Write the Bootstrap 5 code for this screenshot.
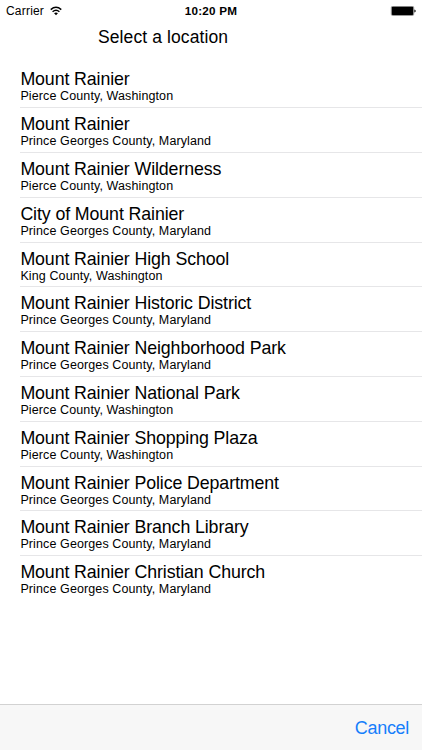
<!DOCTYPE html>
<html lang="en">
<head>
<meta charset="utf-8">
<meta name="viewport" content="width=device-width, initial-scale=1">
<title>Select a location</title>
<link href="https://cdn.jsdelivr.net/npm/bootstrap@5.3.0/dist/css/bootstrap.min.css" rel="stylesheet">
<style>
body{font-family:"Liberation Sans",Arial,sans-serif;color:#000;background:#fff}
.screen{height:750px;overflow:hidden}
.status{height:21px;padding:0 6px;font-size:12px;line-height:22px}
.status svg{display:block}
.clock{font-size:11.7px;letter-spacing:.2px}
.carrier{letter-spacing:.2px;margin-right:6px}
.heading{font-size:17.5px;line-height:32px;height:42.4px;padding-left:98px;letter-spacing:.1px}
.places{padding-left:20.4px}
.place{height:44.8px;border-bottom:1px solid #e6e6e8;padding-top:6px}
.place:last-child{border-bottom:0}
.place-name{font-size:17.8px;line-height:20px;letter-spacing:-.11px;white-space:nowrap}
.place-area{font-size:12.5px;line-height:15.6px;letter-spacing:.11px;white-space:nowrap}
.toolbar{height:46px;background:#f7f7f7;border-top:1px solid #d2d2d2;padding:0 13px}
.cancel{font-size:18px;line-height:46px;letter-spacing:-.3px;color:#167efb;text-decoration:none}
</style>
</head>
<body>
<div class="screen d-flex flex-column">
<header class="status row g-0 flex-shrink-0">
<div class="col d-flex align-items-center"><span class="carrier">Carrier</span>
<svg width="12" height="10" viewBox="0 0 13 10" fill="none" stroke="#000" stroke-width="1.6"><path d="M.8 3.5Q6.5-1.4 12.2 3.5M2.8 5.8Q6.5 2.7 10.2 5.8"/><path d="M4.4 7.4Q6.5 5.8 8.6 7.4L6.5 9.6Z" fill="#000" stroke="none"/></svg></div>
<div class="col-auto fw-bold clock">10:20 PM</div>
<div class="col d-flex align-items-center justify-content-end"><svg width="26" height="10" viewBox="0 0 26 10"><rect x="1.3" y=".3" width="22.4" height="9.2" rx="1.3" fill="none" stroke="#555" stroke-width=".6"/><rect x="1.8" y=".8" width="21.4" height="8.2" rx=".8"/><path d="M24.4 3.4q1.3.4 1.3 1.5t-1.3 1.5Z"/></svg></div>
</header>
<h1 class="heading fw-normal m-0 flex-shrink-0">Select a location</h1>
<main class="places flex-grow-1">
<div class="place"><div class="place-name">Mount Rainier</div><div class="place-area">Pierce County, Washington</div></div>
<div class="place"><div class="place-name">Mount Rainier</div><div class="place-area">Prince Georges County, Maryland</div></div>
<div class="place"><div class="place-name">Mount Rainier Wilderness</div><div class="place-area">Pierce County, Washington</div></div>
<div class="place"><div class="place-name">City of Mount Rainier</div><div class="place-area">Prince Georges County, Maryland</div></div>
<div class="place"><div class="place-name">Mount Rainier High School</div><div class="place-area">King County, Washington</div></div>
<div class="place"><div class="place-name">Mount Rainier Historic District</div><div class="place-area">Prince Georges County, Maryland</div></div>
<div class="place"><div class="place-name">Mount Rainier Neighborhood Park</div><div class="place-area">Prince Georges County, Maryland</div></div>
<div class="place"><div class="place-name">Mount Rainier National Park</div><div class="place-area">Pierce County, Washington</div></div>
<div class="place"><div class="place-name">Mount Rainier Shopping Plaza</div><div class="place-area">Pierce County, Washington</div></div>
<div class="place"><div class="place-name">Mount Rainier Police Department</div><div class="place-area">Prince Georges County, Maryland</div></div>
<div class="place"><div class="place-name">Mount Rainier Branch Library</div><div class="place-area">Prince Georges County, Maryland</div></div>
<div class="place"><div class="place-name">Mount Rainier Christian Church</div><div class="place-area">Prince Georges County, Maryland</div></div>
</main>
<footer class="toolbar d-flex justify-content-end flex-shrink-0"><a href="#" class="cancel">Cancel</a></footer>
</div>
<script src="https://cdn.jsdelivr.net/npm/bootstrap@5.3.0/dist/js/bootstrap.bundle.min.js"></script>
</body>
</html>
